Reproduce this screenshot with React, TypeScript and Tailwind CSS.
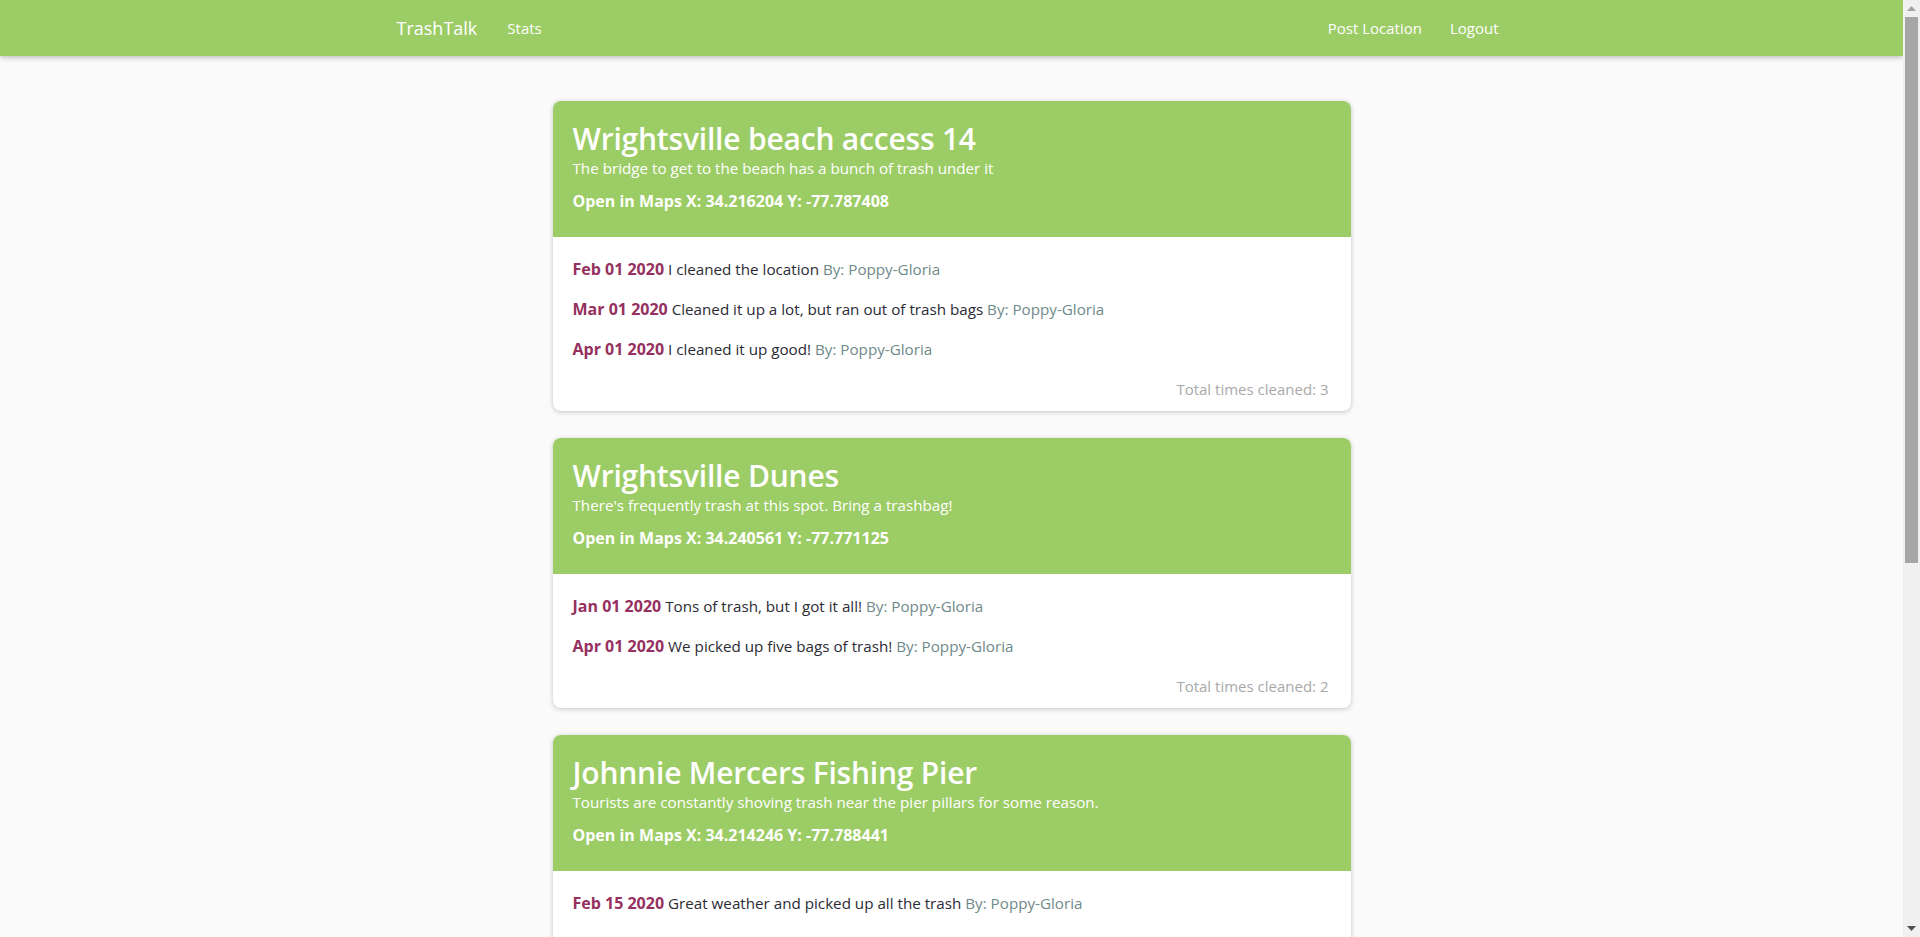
import React from "react";

type Clean = { date: string; text: string; by: string };
type Loc = { title: string; desc: string; x: string; y: string; cleans: Clean[] };

const locations: Loc[] = [
  {
    title: "Wrightsville beach access 14",
    desc: "The bridge to get to the beach has a bunch of trash under it",
    x: "34.216204",
    y: "-77.787408",
    cleans: [
      { date: "Feb 01 2020", text: "I cleaned the location", by: "Poppy-Gloria" },
      { date: "Mar 01 2020", text: "Cleaned it up a lot, but ran out of trash bags", by: "Poppy-Gloria" },
      { date: "Apr 01 2020", text: "I cleaned it up good!", by: "Poppy-Gloria" },
    ],
  },
  {
    title: "Wrightsville Dunes",
    desc: "There's frequently trash at this spot. Bring a trashbag!",
    x: "34.240561",
    y: "-77.771125",
    cleans: [
      { date: "Jan 01 2020", text: "Tons of trash, but I got it all!", by: "Poppy-Gloria" },
      { date: "Apr 01 2020", text: "We picked up five bags of trash!", by: "Poppy-Gloria" },
    ],
  },
  {
    title: "Johnnie Mercers Fishing Pier",
    desc: "Tourists are constantly shoving trash near the pier pillars for some reason.",
    x: "34.214246",
    y: "-77.788441",
    cleans: [
      { date: "Feb 15 2020", text: "Great weather and picked up all the trash", by: "Poppy-Gloria" },
      { date: "Mar 15 2020", text: "Lots of bottles near the pillars", by: "Poppy-Gloria" },
    ],
  },
  {
    title: "Masonboro Island",
    desc: "Boaters leave trash on the sound side of the island.",
    x: "34.146512",
    y: "-77.850193",
    cleans: [
      { date: "Mar 20 2020", text: "Picked up cans and bottles", by: "Poppy-Gloria" },
      { date: "Apr 20 2020", text: "Not too bad this time", by: "Poppy-Gloria" },
    ],
  },
];

function Card({ loc }: { loc: Loc }) {
  return (
    <div className="w-[798px] mx-auto rounded-lg bg-white shadow-[0_1px_5px_rgba(0,0,0,0.22)] overflow-hidden">
      <div className="bg-[#9ccc65] text-white px-[20px] pt-[20px] pb-[24px]">
        <h1 className="text-[30px] leading-[36px] font-semibold tracking-[-0.2px]">{loc.title}</h1>
        <p className="text-[15.2px] leading-[22px]">{loc.desc}</p>
        <p className="mt-[10px] text-[16px] leading-[24px] font-bold">
          Open in Maps X: {loc.x} Y: {loc.y}
        </p>
      </div>
      <div className="pl-[20px] pr-[22px] pt-[20px] pb-[10px]">
        {loc.cleans.map((c, i) => (
          <p key={i} className="mb-4 leading-[24px] text-[15.2px] text-[#2b2b35]">
            <span className="font-bold text-[16px] text-[#953060]">{c.date}</span> {c.text}{" "}
            <span className="text-[#6f8a8a]">By: {c.by}</span>
          </p>
        ))}
        <p className="text-right leading-[24px] text-[15px] text-[#a9a9a9]">
          Total times cleaned: {loc.cleans.length}
        </p>
      </div>
    </div>
  );
}

function Scrollbar() {
  return (
    <div className="w-[17px] h-screen shrink-0 bg-[#f0f0f0] flex flex-col items-center">
      <div className="h-[17px] w-full flex items-center justify-center">
        <svg width="9" height="5" viewBox="0 0 9 5">
          <path d="M4.5 0 L9 5 L0 5 Z" fill="#a3a3a3" />
        </svg>
      </div>
      <div className="w-[13px] h-[546px] bg-[#a6a6a6]" />
      <div className="flex-1" />
      <div className="h-[17px] w-full flex items-center justify-center">
        <svg width="9" height="5" viewBox="0 0 9 5">
          <path d="M0 0 L9 0 L4.5 5 Z" fill="#505050" />
        </svg>
      </div>
    </div>
  );
}

export default function App() {
  return (
    <div className="h-screen flex overflow-hidden bg-[#fafafa] [font-family:'Open_Sans',sans-serif]">
      <div className="flex-1 min-w-0 h-screen overflow-hidden">
        <nav className="h-14 bg-[#9ccc65] shadow-[0_2px_5px_rgba(0,0,0,0.22)] relative z-10">
          <div className="w-[1140px] mx-auto px-[15px] h-full flex items-center justify-between text-white">
            <div className="flex items-center gap-[30px]">
              <span className="text-[18px]">TrashTalk</span>
              <span className="text-[15px]">Stats</span>
            </div>
            <div className="flex items-center gap-[28px] pr-[8px] text-[15px]">
              <span>Post Location</span>
              <span>Logout</span>
            </div>
          </div>
        </nav>
        <main className="pt-[45px] pb-[45px] flex flex-col gap-[27px]">
          {locations.map((l) => (
            <Card key={l.title} loc={l} />
          ))}
        </main>
      </div>
      <Scrollbar />
    </div>
  );
}
